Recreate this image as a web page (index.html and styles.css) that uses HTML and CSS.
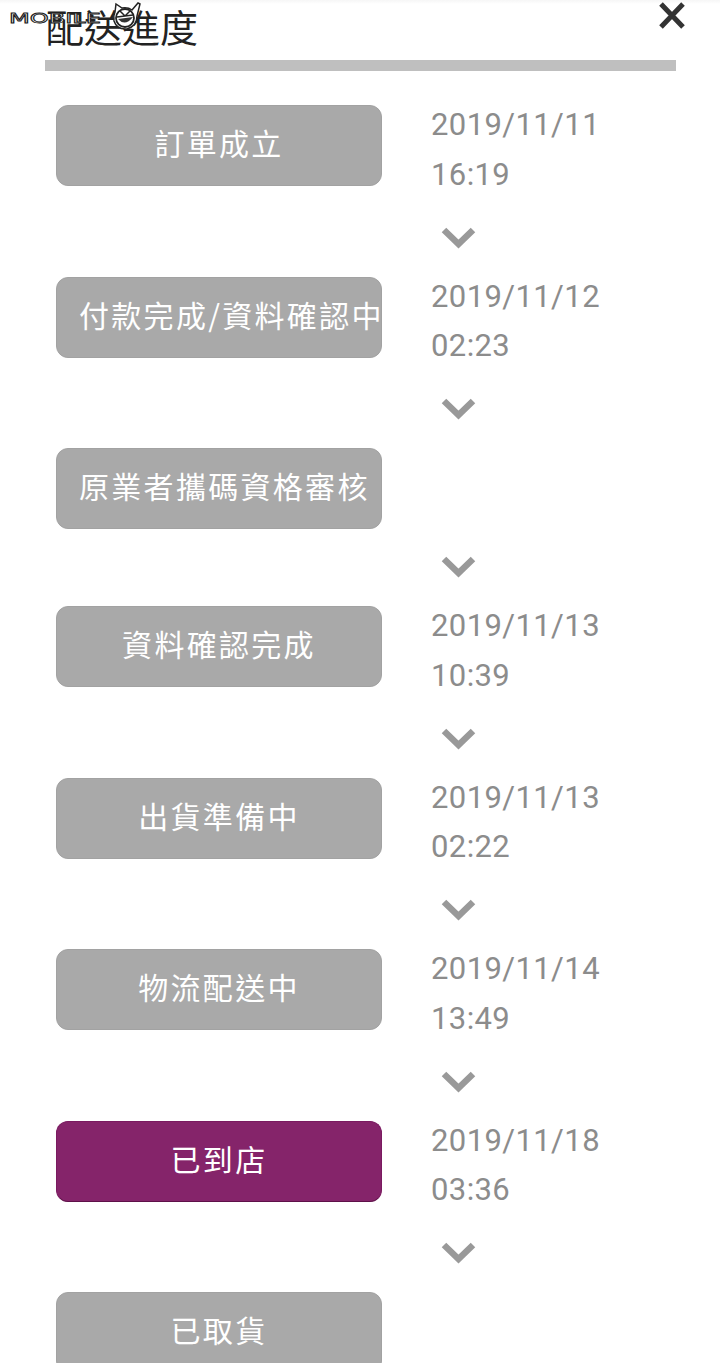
FILE: index.html
```html
<!DOCTYPE html>
<html>
    <head>
        <meta charset="utf-8" />
        <title>配送進度</title>
        <link rel="stylesheet" href="styles.css">
    </head>
    <body>
        <div class="page">
            <header class="head">
                <h2>配送進度</h2>
                <svg class="close" width="28" height="28" viewBox="0 0 28 28">
                    <path d="M3 2 L25 25 M25 2 L3 25" stroke="#333" stroke-width="5"/>
                </svg>
            </header>
            <div class="steps">
                <div class="step">
                    <div class="btn">訂單成立</div>
                    <div class="time">2019/11/11<br>16:19</div>
                </div>
                <div class="arrow"><svg width="35" height="22" viewBox="0 0 35 22"><path d="M3 3 L17.5 17 L32 3" /></svg></div>
                <div class="step">
                    <div class="btn">付款完成/資料確認中</div>
                    <div class="time">2019/11/12<br>02:23</div>
                </div>
                <div class="arrow"><svg width="35" height="22" viewBox="0 0 35 22"><path d="M3 3 L17.5 17 L32 3" /></svg></div>
                <div class="step">
                    <div class="btn">原業者攜碼資格審核</div>
                </div>
                <div class="arrow"><svg width="35" height="22" viewBox="0 0 35 22"><path d="M3 3 L17.5 17 L32 3" /></svg></div>
                <div class="step">
                    <div class="btn">資料確認完成</div>
                    <div class="time">2019/11/13<br>10:39</div>
                </div>
                <div class="arrow"><svg width="35" height="22" viewBox="0 0 35 22"><path d="M3 3 L17.5 17 L32 3" /></svg></div>
                <div class="step">
                    <div class="btn">出貨準備中</div>
                    <div class="time">2019/11/13<br>02:22</div>
                </div>
                <div class="arrow"><svg width="35" height="22" viewBox="0 0 35 22"><path d="M3 3 L17.5 17 L32 3" /></svg></div>
                <div class="step">
                    <div class="btn">物流配送中</div>
                    <div class="time">2019/11/14<br>13:49</div>
                </div>
                <div class="arrow"><svg width="35" height="22" viewBox="0 0 35 22"><path d="M3 3 L17.5 17 L32 3" /></svg></div>
                <div class="step">
                    <div class="btn btn_on">已到店</div>
                    <div class="time">2019/11/18<br>03:36</div>
                </div>
                <div class="arrow"><svg width="35" height="22" viewBox="0 0 35 22"><path d="M3 3 L17.5 17 L32 3" /></svg></div>
                <div class="step">
                    <div class="btn">已取貨</div>
                </div>
            </div>
        </div>
        <!--左上角浮水印，蓋在標題上面-->
        <div class="mark">
            <span class="mark_text">MOBILE</span>
            <svg class="mark_logo" width="32" height="30" viewBox="0 0 32 30">
                <path d="M5 10 L6 2 L12 6 Q18 5 22 8 L28 1 L30 2 L27 14 Q27 24 17 27 Q7 28 4 19 Q3 14 5 10 Z" fill="#fff" stroke="#222" stroke-width="1.5"/>
                <circle cx="15" cy="16" r="9" fill="#fff" stroke="#222" stroke-width="1.8"/>
                <path d="M7 15 L23 13 M15 14 L10 9 M15 14 L20 9" fill="none" stroke="#222" stroke-width="1.5"/>
                <path d="M8 17 Q15 25 23 15 Z" fill="#333"/>
            </svg>
        </div>
    </body>
</html>
```

FILE: styles.css
```css
html,body{
    margin:0;
    height:100%;
    overflow:hidden;
}
body{
    background:linear-gradient(#f6f6f6,#fff 4px);
    font-family:"Noto Sans CJK TC","Noto Sans",sans-serif;
}
.page{
    padding:0 44px 0 45px;
}
.head{
    height:60px;
    display:flex;
    justify-content:space-between;
    border-bottom:11px solid #bfbfbf;
}
.head h2{
    margin:0;
    padding:3px 0 0 1px;
    font-size:38px;
    line-height:46px;
    font-weight:400;
    color:#222;
}
.close{
    margin:2px -10px 0 0;
}
.steps{
    padding:29px 0 0 11px;
}
.step{
    display:flex;
    min-height:86px;
}
/*按鈕的字比框長時不換行，直接超出*/
.btn{
    box-sizing:border-box;
    width:326px;
    height:81px;
    margin-top:5px;
    padding:0 22px;
    flex-shrink:0;
    background:#a9a9a9;
    border:1px solid #a2a2a2;
    border-radius:12px;
    color:#fff;
    font-size:30px;
    line-height:73px;
    letter-spacing:2.3px;
    text-align:center;
    white-space:nowrap;
}
.btn_on{
    background:#85246a;
    border-color:#7a1a60;
    border-bottom-color:#5e1049;
}
.time{
    margin-left:49px;
    font-family:Roboto,"Noto Sans",sans-serif;
    font-size:31px;
    line-height:49.75px;
    letter-spacing:.4px;
    color:#8c8c8c;
}
.arrow{
    height:72px;
    padding-left:385px;
    display:flex;
    align-items:center;
    box-sizing:border-box;
}
.arrow svg{
    margin-top:4px;
}
.arrow path{
    fill:none;
    stroke:#999;
    stroke-width:6.5;
}
.mark{
    position:absolute;
    left:9px;
    top:2px;
    display:flex;
    align-items:flex-start;
}
.mark_text{
    display:block;
    width:101px;
    margin-top:6px;
    font-family:"DejaVu Sans",sans-serif;
    font-size:14px;
    line-height:20px;
    color:#fff;
    -webkit-text-stroke:.8px #222;
    transform:scaleX(1.72);
    transform-origin:left center;
}
.mark_logo{
    margin-top:0;
}
```
